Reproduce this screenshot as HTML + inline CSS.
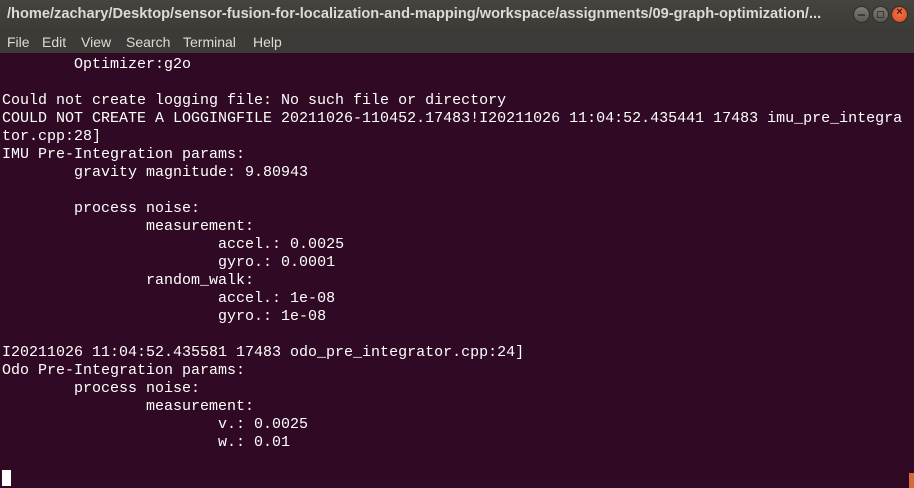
<!DOCTYPE html>
<html><head><meta charset="utf-8"><style>
html,body{margin:0;padding:0;width:914px;height:488px;overflow:hidden;background:#300a24}
#title{position:absolute;left:0;top:0;width:914px;height:31px;background:linear-gradient(#45443f,#3c3b37);}
#title span{position:absolute;left:7px;top:6px;font:bold 14.6px "Liberation Sans",sans-serif;color:#dfdbd2;white-space:nowrap}
.btn{position:absolute;top:6px;width:17px;height:17px;border-radius:50%;background:linear-gradient(#7d7b74,#5a5853);box-sizing:border-box;border:1px solid #2f2e2b}
.btn.c{background:radial-gradient(circle at 50% 40%,#f2764a,#d9481b)}
#menu{position:absolute;left:0;top:31px;width:914px;height:22px;background:#3c3b37;font:14px "Liberation Sans",sans-serif;color:#dfdbd2}
#menu span{position:absolute;top:3px}
#term{position:absolute;left:2px;top:56px;margin:0;font:15px/18px "Liberation Mono",monospace;color:#ffffff;white-space:pre;tab-size:8}
#cur{position:absolute;left:2px;top:470px;width:9px;height:16px;background:#fff}
#sb{position:absolute;left:909px;top:473px;width:5px;height:15px;background:#d56a3c}
</style></head><body>
<div id="title"><span>/home/zachary/Desktop/sensor-fusion-for-localization-and-mapping/workspace/assignments/09-graph-optimization/...</span>
<div class="btn" style="left:853px"><div style="position:absolute;left:4px;top:7px;width:7px;height:1.5px;background:#3c3b37"></div></div>
<div class="btn" style="left:872px"><div style="position:absolute;left:4px;top:4px;width:5px;height:5px;border:1px solid #3c3b37"></div></div>
<div class="btn c" style="left:891px"><div style="position:absolute;left:0;top:-1px;width:15px;text-align:center;font:bold 11px 'Liberation Sans',sans-serif;color:#3a1a10">×</div></div>
</div>
<div id="menu"><span style="left:7px">File</span><span style="left:42px">Edit</span><span style="left:81px">View</span><span style="left:126px">Search</span><span style="left:183px">Terminal</span><span style="left:253px">Help</span></div>
<pre id="term">	Optimizer:g2o

Could not create logging file: No such file or directory
COULD NOT CREATE A LOGGINGFILE 20211026-110452.17483!I20211026 11:04:52.435441 17483 imu_pre_integra
tor.cpp:28]
IMU Pre-Integration params:
	gravity magnitude: 9.80943

	process noise:
		measurement:
			accel.: 0.0025
			gyro.: 0.0001
		random_walk:
			accel.: 1e-08
			gyro.: 1e-08

I20211026 11:04:52.435581 17483 odo_pre_integrator.cpp:24]
Odo Pre-Integration params:
	process noise:
		measurement:
			v.: 0.0025
			w.: 0.01
</pre>
<div id="cur"></div><div id="sb"></div>
</body></html>
